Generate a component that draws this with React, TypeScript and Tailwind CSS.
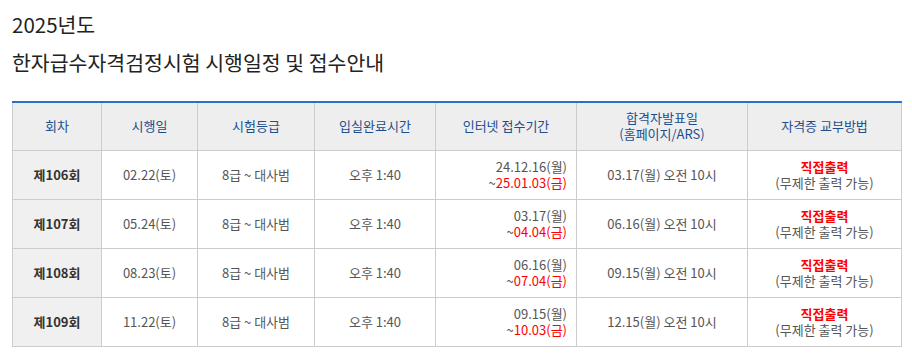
import React from "react";

type Row = {
  no: string;
  date: string;
  grade: string;
  entry: string;
  from: string;
  to: string;
  result: string;
};

const rows: Row[] = [
  { no: "제106회", date: "02.22(토)", grade: "8급 ~ 대사범", entry: "오후 1:40", from: "24.12.16(월)", to: "25.01.03(금)", result: "03.17(월) 오전 10시" },
  { no: "제107회", date: "05.24(토)", grade: "8급 ~ 대사범", entry: "오후 1:40", from: "03.17(월)", to: "04.04(금)", result: "06.16(월) 오전 10시" },
  { no: "제108회", date: "08.23(토)", grade: "8급 ~ 대사범", entry: "오후 1:40", from: "06.16(월)", to: "07.04(금)", result: "09.15(월) 오전 10시" },
  { no: "제109회", date: "11.22(토)", grade: "8급 ~ 대사범", entry: "오후 1:40", from: "09.15(월)", to: "10.03(금)", result: "12.15(월) 오전 10시" },
];

const th = "border border-[#cccccc] bg-[#eeeeee] font-normal text-[#1d4f8f] text-center align-middle leading-[16px]";
const td = "border border-[#cccccc] text-center align-middle leading-[16px]";

export default function App() {
  return (
    <div className="bg-white px-3 pt-[8px] text-[#222222] font-['Noto_Sans_CJK_KR','Noto_Sans',sans-serif]">
      <h2 className="text-[20.5px] leading-[32px]">2025년도</h2>
      <h2 className="mt-[6px] text-[20.5px] leading-[32px]">한자급수자격검정시험 시행일정 및 접수안내</h2>

      <table className="mt-[23px] w-[889px] table-fixed border-collapse border-t-2 border-t-[#2873c8] text-[13px] text-[#555555]">
        <colgroup>
          <col className="w-[89px]" />
          <col className="w-[96px]" />
          <col className="w-[117px]" />
          <col className="w-[121px]" />
          <col className="w-[141px]" />
          <col className="w-[171px]" />
          <col className="w-[154px]" />
        </colgroup>
        <thead>
          <tr className="h-[48px]">
            <th className={th}>회차</th>
            <th className={th}>시행일</th>
            <th className={th}>시험등급</th>
            <th className={th}>입실완료시간</th>
            <th className={th}>인터넷 접수기간</th>
            <th className={th}>
              합격자발표일
              <br />
              (홈페이지/ARS)
            </th>
            <th className={th}>자격증 교부방법</th>
          </tr>
        </thead>
        <tbody>
          {rows.map((r) => (
            <tr key={r.no} className="h-[49px]">
              <td className={`${td} bg-[#f0f0f0] font-bold text-[#333333]`}>{r.no}</td>
              <td className={td}>{r.date}</td>
              <td className={td}>{r.grade}</td>
              <td className={td}>{r.entry}</td>
              <td className={`${td} !text-right pr-[9px]`}>
                {r.from}
                <br />~<span className="text-[#ff0000]">{r.to}</span>
              </td>
              <td className={td}>{r.result}</td>
              <td className={td}>
                <span className="font-bold text-[#ff0000]">직접출력</span>
                <br />
                (무제한 출력 가능)
              </td>
            </tr>
          ))}
        </tbody>
      </table>
    </div>
  );
}
